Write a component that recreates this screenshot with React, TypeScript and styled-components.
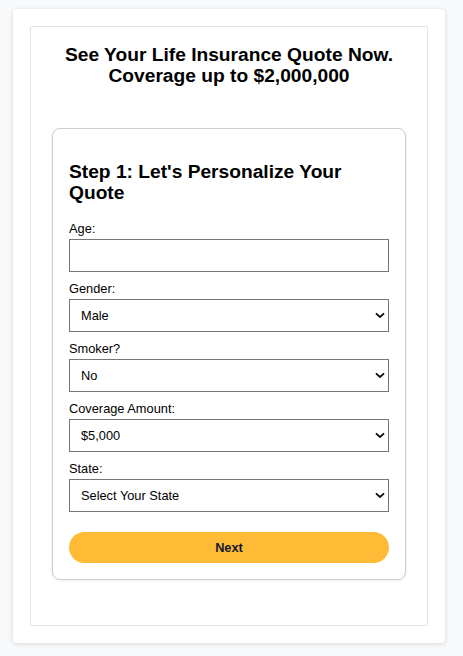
import * as React from "react";
import styled, { createGlobalStyle } from "styled-components";

const GlobalStyle = createGlobalStyle`
  html, body {
    margin: 0;
    padding: 0;
    background: #f8f9fb;
    font-family: "Liberation Sans", Arial, sans-serif;
  }
`;

const Page = styled.div`
  padding: 9px 18px 14px 13px;
`;

const Outer = styled.div`
  background: #ffffff;
  border-radius: 4px;
  box-shadow: 0 1px 5px rgba(0, 0, 0, 0.14);
  padding: 17px;
`;

const Inner = styled.div`
  border: 1px solid #e4e4e4;
  border-radius: 2px;
  padding: 17px 21px 45px;
`;

const Title = styled.h1`
  margin: 0 0 42px;
  font-size: 19.2px;
  line-height: 21px;
  font-weight: bold;
  text-align: center;
  color: #000;
`;

const FormCard = styled.form`
  border: 1px solid #cdcdcd;
  border-radius: 8px;
  box-shadow: 0 1px 3px rgba(0, 0, 0, 0.08);
  padding: 0 16px 16px;
`;

const StepHeading = styled.h2`
  margin: 0;
  padding: 32px 0 18px;
  font-size: 19.2px;
  line-height: 21px;
  font-weight: bold;
  color: #000;
`;

const Field = styled.div`
  margin-bottom: 9px;
`;

const Label = styled.label`
  display: block;
  font-size: 12.8px;
  line-height: 15px;
  color: #000;
  margin-bottom: 3px;
`;

const TextInput = styled.input`
  box-sizing: border-box;
  display: block;
  width: 100%;
  height: 33px;
  border: 1px solid #767676;
  border-radius: 0;
  padding: 0 12px;
  font-family: inherit;
  font-size: 12.8px;
  background: #fff;
`;

const SelectWrap = styled.div`
  position: relative;
`;

const Select = styled.select`
  box-sizing: border-box;
  display: block;
  width: 100%;
  height: 33px;
  border: 1px solid #767676;
  border-radius: 0;
  padding: 0 24px 0 11px;
  font-family: inherit;
  font-size: 12.8px;
  color: #000;
  background: #fff;
  appearance: none;
  -webkit-appearance: none;
`;

const Chevron = styled.svg`
  position: absolute;
  right: 4px;
  top: 13px;
  width: 10px;
  height: 7px;
  pointer-events: none;
`;

const NextButton = styled.button`
  display: block;
  width: 100%;
  height: 31px;
  margin-top: 20px;
  border: none;
  border-radius: 16px;
  background: #ffbb36;
  color: #141a2e;
  font-family: inherit;
  font-size: 12.8px;
  font-weight: bold;
  cursor: pointer;
`;

const SelectField = ({
  label,
  options,
}: {
  label: string;
  options: string[];
}) => (
  <Field>
    <Label>{label}</Label>
    <SelectWrap>
      <Select defaultValue={options[0]}>
        {options.map((o) => (
          <option key={o}>{o}</option>
        ))}
      </Select>
      <Chevron viewBox="0 0 10 7">
        <path
          d="M1.5 1.8 L5 5 L8.5 1.8"
          fill="none"
          stroke="#111"
          strokeWidth="1.8"
          strokeLinecap="round"
          strokeLinejoin="round"
        />
      </Chevron>
    </SelectWrap>
  </Field>
);

export default function App() {
  return (
    <Page>
      <GlobalStyle />
      <Outer>
        <Inner>
          <Title>
            See Your Life Insurance Quote Now.
            <br />
            Coverage up to $2,000,000
          </Title>
          <FormCard onSubmit={(e) => e.preventDefault()}>
            <StepHeading>Step 1: Let's Personalize Your Quote</StepHeading>
            <Field>
              <Label>Age:</Label>
              <TextInput type="text" />
            </Field>
            <SelectField label="Gender:" options={["Male", "Female"]} />
            <SelectField label="Smoker?" options={["No", "Yes"]} />
            <SelectField
              label="Coverage Amount:"
              options={["$5,000", "$10,000", "$50,000", "$100,000"]}
            />
            <SelectField label="State:" options={["Select Your State"]} />
            <NextButton type="submit">Next</NextButton>
          </FormCard>
        </Inner>
      </Outer>
    </Page>
  );
}
